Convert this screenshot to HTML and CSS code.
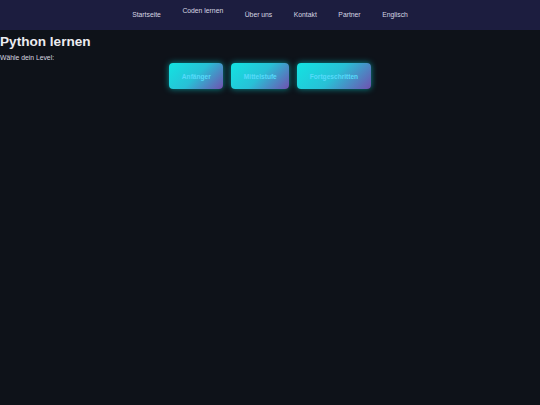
FILE: index.html
```html
<!DOCTYPE html>
<html lang="de">
<head>
<meta charset="utf-8">
<title>Python lernen</title>
<link rel="stylesheet" href="styles.css">
</head>
<body>
<nav class="topnav">
  <a class="nav-link" href="#">Startseite</a>
  <a class="nav-link nav-raised" href="#">Coden lernen</a>
  <a class="nav-link" href="#">Über uns</a>
  <a class="nav-link" href="#">Kontakt</a>
  <a class="nav-link" href="#">Partner</a>
  <a class="nav-link" href="#">Englisch</a>
</nav>
<main class="content">
  <h1 class="title">Python lernen</h1>
  <p class="subtitle">Wähle dein Level:</p>
  <div class="levels">
    <button class="level-btn">Anfänger</button>
    <button class="level-btn">Mittelstufe</button>
    <button class="level-btn">Fortgeschritten</button>
  </div>
</main>
</body>
</html>
```
FILE: styles.css
```css
html, body {
  margin: 0;
  padding: 0;
  height: 100%;
}
body {
  background: #0e1219;
  font-family: "Liberation Sans", Arial, sans-serif;
  color: #e6e6ec;
}
.topnav {
  display: flex;
  justify-content: center;
  align-items: center;
  gap: 21.5px;
  height: 30px;
  background: #1c1d3f;
}
.nav-link {
  color: #d6d6e2;
  text-decoration: none;
  font-size: 6.8px;
  line-height: 8px;
}
.nav-raised {
  position: relative;
  top: -4px;
}
.content {
  padding: 0;
}
.title {
  margin: 4px 0 0 0;
  font-size: 13.6px;
  line-height: 16px;
  font-weight: bold;
  color: #ececf0;
}
.subtitle {
  margin: 4px 0 0 0;
  font-size: 6.8px;
  line-height: 8px;
  color: #d8d8e0;
}
.levels {
  display: flex;
  justify-content: center;
  gap: 8px;
  margin-top: 1px;
}
.level-btn {
  border: none;
  border-radius: 4px;
  padding: 9px 12.5px;
  height: 26px;
  font-family: "Liberation Sans", Arial, sans-serif;
  font-size: 6.6px;
  font-weight: bold;
  color: #56dafa;
  background: linear-gradient(135deg, #12e4e2 0%, #28c0d6 50%, #7050b0 100%);
  box-shadow: 0 0 6px rgba(0, 240, 240, 0.55);
}
```
